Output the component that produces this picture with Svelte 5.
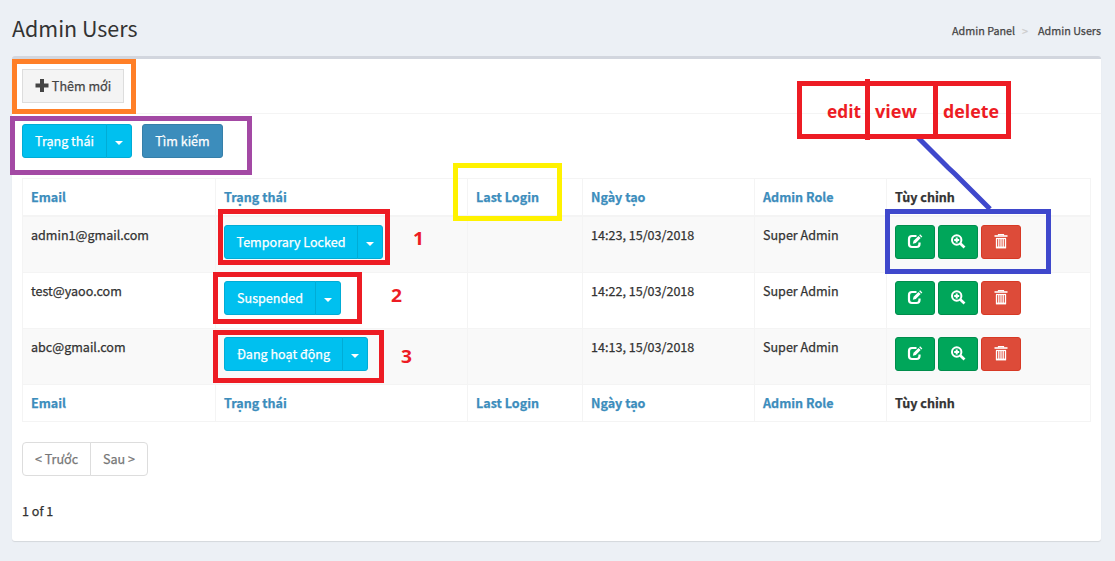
<script>
  const columns = ['Email', 'Trạng thái', 'Last Login', 'Ngày tạo', 'Admin Role', 'Tùy chỉnh'];
  const users = [
    { email: 'admin1@gmail.com', status: 'Temporary Locked', width: 159, created: '14:23, 15/03/2018', role: 'Super Admin' },
    { email: 'test@yaoo.com', status: 'Suspended', width: 117, created: '14:22, 15/03/2018', role: 'Super Admin' },
    { email: 'abc@gmail.com', status: 'Đang hoạt động', width: 144, created: '14:13, 15/03/2018', role: 'Super Admin' }
  ];
  const frames = [
    { x: 12, y: 59, w: 124, h: 55, color: '#ff7f27' },
    { x: 10, y: 116, w: 242, h: 59, color: '#a349a4' },
    { x: 218, y: 209, w: 172, h: 56, color: '#ed1c24' },
    { x: 213, y: 272, w: 149, h: 52, color: '#ed1c24' },
    { x: 213, y: 330, w: 171, h: 53, color: '#ed1c24' },
    { x: 453, y: 163, w: 109, h: 58, color: '#fff200' },
    { x: 797, y: 81, w: 214, h: 58, color: '#ed1c24' },
    { x: 885, y: 209, w: 166, h: 65, color: '#3f48cc' }
  ];
  const labels = [
    { text: 'edit', x: 827, y: 118, w: 34 },
    { text: 'view', x: 875, y: 118, w: 42 },
    { text: 'delete', x: 943, y: 118, w: 56 },
    { text: '1', x: 413, y: 245, w: 11 },
    { text: '2', x: 391, y: 302, w: 11 },
    { text: '3', x: 401, y: 363, w: 11 }
  ];
</script>

{#snippet split(label, width)}
  <div class="split" style="width: {width}px">
    <button class="main"><span>{label}</span></button>
    <button class="toggle" aria-label="Menu"><i class="caret"></i></button>
  </div>
{/snippet}

<div class="page">
  <header>
    <h1>Admin Users</h1>
    <nav><a>Admin Panel</a><i>&gt;</i><a>Admin Users</a></nav>
  </header>

  <section class="box">
    <div class="box-head">
      <button class="add">
        <svg width="14" height="14" viewBox="0 0 14 14"><path d="M5 0h4v4.500h4.500v4H9V13H5V8.500H.5v-4H5z" fill="#444" /></svg>
        <span>Thêm mới</span>
      </button>
    </div>
    <div class="tools">
      {@render split('Trạng thái', 110)}
      <button class="search"><span>Tìm kiếm</span></button>
    </div>

    <div class="table">
      {#each columns as c, i}<div class="cell head" class:dark={i === 5}><span>{c}</span></div>{/each}
      {#each users as u, i}
        <div class="cell" class:odd={i % 2 === 0}><span>{u.email}</span></div>
        <div class="cell" class:odd={i % 2 === 0}>{@render split(u.status, u.width)}</div>
        <div class="cell" class:odd={i % 2 === 0}></div>
        <div class="cell" class:odd={i % 2 === 0}><span>{u.created}</span></div>
        <div class="cell" class:odd={i % 2 === 0}><span>{u.role}</span></div>
        <div class="cell actions" class:odd={i % 2 === 0}>
          <button class="act" aria-label="Edit">
            <svg width="16" height="16" viewBox="0 0 16 16" fill="none" stroke="#fff">
              <path d="M9.500 2H5Q2 2 2 5v5q0 3 3 3h4.500q3 0 3-3V8.500" stroke-width="2.200" />
              <path d="M5.800 9.800l.8-3 4.900-4.900 2.200 2.200L8.800 9z" fill="#fff" stroke="none" />
              <path d="M12.200 1.200l.9-.9 2.200 2.200-.9.9z" fill="#fff" stroke="none" />
            </svg>
          </button>
          <button class="act" aria-label="View">
            <svg width="16" height="16" viewBox="0 0 16 16" fill="none" stroke="#fff">
              <circle cx="6.700" cy="6" r="4.700" stroke-width="2" />
              <path d="M10.300 9.500l4.200 4" stroke-width="2.700" />
              <path d="M6.700 3.500v5M4.200 6h5" stroke-width="2" />
            </svg>
          </button>
          <button class="act danger" aria-label="Delete">
            <svg width="16" height="16" viewBox="0 0 16 16" fill="none" stroke="#fff">
              <path d="M5.500 1.500V.5h5v1" stroke-width="1.200" />
              <path d="M1.500 2h13" stroke-width="1.600" />
              <path d="M3 4.500h10" stroke-width="1.200" />
              <path d="M3.500 4.500v9h9v-9M5.800 4.500v9M8 4.500v9M10.200 4.500v9" stroke-width="1.300" />
              <path d="M3 13.500h10" stroke-width="1.500" />
            </svg>
          </button>
        </div>
      {/each}
      {#each columns as c, i}<div class="cell foot" class:dark={i === 5}><span>{c}</span></div>{/each}
    </div>

    <div class="pager">
      <button class="prev"><span>&lt; Trước</span></button>
      <button class="next"><span>Sau &gt;</span></button>
    </div>
    <p class="count">1 of 1</p>
  </section>

  <svg class="notes" width="1115" height="561" viewBox="0 0 1115 561">
    <path d="M918 137.500L948 167.500L955 174L990 209" fill="none" stroke="#3f48cc" stroke-width="5" />
    {#each frames as f}
      <rect x={f.x + 2.5} y={f.y + 2.5} width={f.w - 5} height={f.h - 5} fill="none" stroke={f.color} stroke-width="5" />
    {/each}
    <path d="M867.500 79v61M935.500 82v56" stroke="#ed1c24" stroke-width="5" />
    {#each labels as l}
      <text x={l.x} y={l.y} textLength={l.w} lengthAdjust="spacingAndGlyphs">{l.text}</text>
    {/each}
  </svg>
</div>

<style>
  :global(body) { margin: 0; background: #ecf0f5; }
  .page {
    position: relative; box-sizing: border-box; width: 1115px; height: 561px; overflow: hidden;
    padding: 0 14px 0 12px; background: #ecf0f5; color: #333;
    font-family: "Noto Sans CJK SC", "Noto Sans", sans-serif; font-size: 12.570px; line-height: 20px;
    -webkit-text-stroke: .25px;
  }
  .page * { box-sizing: border-box; }
  button {
    font: inherit; color: #fff; margin: 0; padding: 0; height: 34px; border: 1px solid;
    display: flex; align-items: center; justify-content: center; white-space: nowrap;
  }
  header { height: 56px; display: flex; justify-content: space-between; align-items: flex-start; }
  h1 { margin: 0; padding-top: 15px; font-size: 21.450px; line-height: 26px; font-weight: 400; -webkit-text-stroke: 0; }
  nav { display: flex; padding-top: 21px; font-size: 10.750px; color: #444; }
  nav i { font-style: normal; color: #ccc; width: 23px; padding-left: 7px; }
  .box {
    height: 485px; background: #fff; border-top: 3px solid #d2d6de; border-radius: 3px;
    box-shadow: 0 1px 1px rgba(0, 0, 0, .1);
  }
  .box-head { height: 55px; padding: 10px; border-bottom: 1px solid #f4f4f4; }
  .add { width: 102px; background: #f4f4f4; border-color: #ddd; color: #444; gap: 3px; }
  .tools { display: flex; gap: 10px; padding: 10px 10px 20px; }
  .split { display: flex; height: 34px; }
  .main, .toggle { background: #00c0ef; border-color: #00acd6; }
  .main { flex: 1; border-radius: 3px 0 0 3px; }
  .toggle { width: 26px; margin-left: -1px; border-radius: 0 3px 3px 0; }
  .caret { border: 4px solid transparent; border-top-color: #fff; border-bottom: 0; margin-top: 4px; }
  .search { width: 81px; background: #3c8dbc; border-color: #367fa9; border-radius: 3px; }
  .table {
    display: grid; grid-template-columns: 193px 252px 115px 172px 132px 204px;
    grid-template-rows: 38px 56px 56px 56px 37px;
    width: 1069px; margin-left: 10px; border: 1px solid #f4f4f4; border-width: 1px 0 0 1px;
  }
  .cell { padding: 8px; border: 1px solid #f4f4f4; border-width: 0 1px 1px 0; }
  .odd { background: #f9f9f9; }
  .head, .foot { font-weight: 700; color: #3c8dbc; }
  .head { border-bottom-width: 2px; }
  .dark { color: #333; }
  .actions { display: flex; gap: 3px; }
  .act { width: 40px; background: #00a65a; border-color: #008d4c; border-radius: 3px; }
  .danger { background: #dd4b39; border-color: #d73925; }
  .pager { display: flex; padding: 20px 10px 0; }
  .pager button { background: #fff; border-color: #ddd; color: #777; }
  .pager .prev { width: 69px; border-radius: 4px 0 0 4px; }
  .pager .next { width: 58px; margin-left: -1px; border-radius: 0 4px 4px 0; }
  .count { margin: 25px 10px 0; }
  .notes { position: absolute; left: 0; top: 0; }
  .notes text { font: 700 18.500px "Open Sans", sans-serif; fill: #ed1c24; }
</style>
